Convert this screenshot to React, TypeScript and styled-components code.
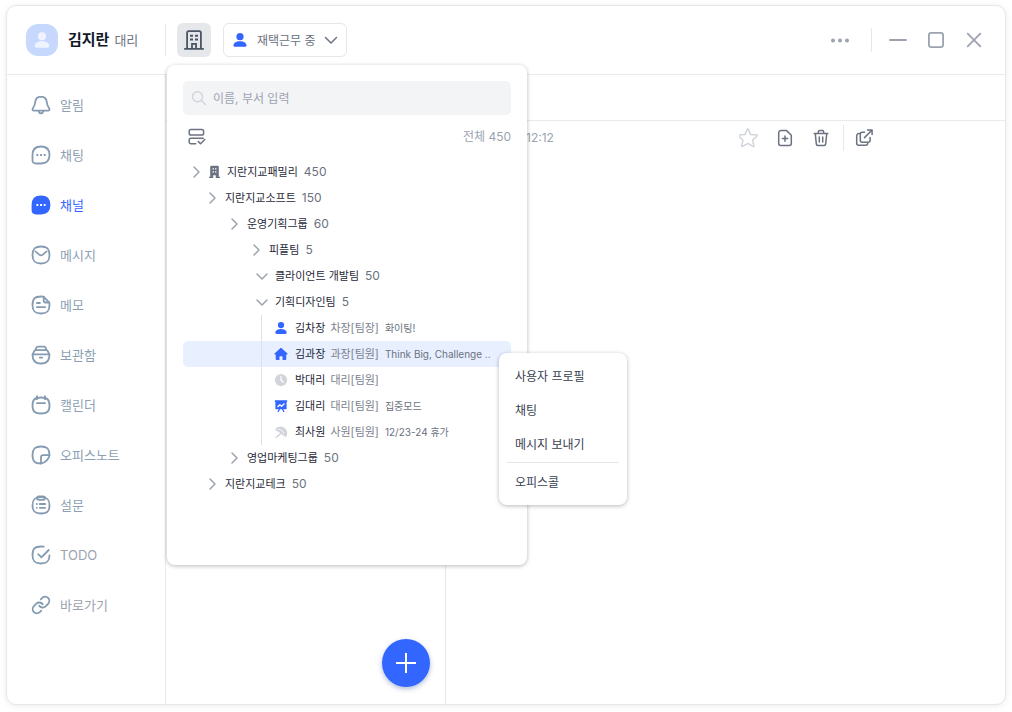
import React from "react";
import styled, { createGlobalStyle, css } from "styled-components";

const GlobalStyle = createGlobalStyle`
  *, *::before, *::after { box-sizing: border-box; }
  body {
    margin: 0;
    background: #fff;
    font-family: Inter, "Noto Sans CJK KR", sans-serif;
    font-size: 12px;
    line-height: 20px;
    color: #1f2937;
  }
  button, input, select { font: inherit; color: inherit; }
  button { padding: 0; border: 0; background: none; cursor: pointer; }
  ul { list-style: none; margin: 0; padding: 0; }
  svg { display: block; flex: none; }
`;

const AppWindow = styled.div`
  display: flex;
  flex-direction: column;
  min-height: calc(100vh - 12px);
  margin: 5px 6px 7px;
  border: 1px solid #e5e7eb;
  border-radius: 10px;
  background: #fff;
  box-shadow: 0 1px 6px rgba(0, 0, 0, 0.08);
`;

const Header = styled.header`
  display: flex;
  align-items: center;
  height: 69px;
  padding: 0 19px;
  border-bottom: 1px solid #e9eaec;
`;

const Profile = styled.div`
  display: flex;
  align-items: center;
  width: 140px;
  height: 32px;
  border-right: 1px solid #e5e7eb;
`;

const Avatar = styled.span`
  display: flex;
  align-items: center;
  justify-content: center;
  width: 32px;
  height: 32px;
  margin-right: 10px;
  border-radius: 12px;
  background: #c7d8ff;
  color: #eef3ff;
`;

const UserName = styled.strong`
  margin-right: 5px;
  font-size: 15px;
  font-weight: 700;
  color: #111827;
`;

const UserRank = styled.span`
  font-size: 13px;
  color: #6b7280;
`;

const OrgAnchor = styled.div`
  position: relative;
  margin: 0 12px 0 11px;
`;

const OrgButton = styled.button`
  display: flex;
  align-items: center;
  justify-content: center;
  width: 34px;
  height: 34px;
  border-radius: 6px;
  background: #e5e7eb;
  color: #4b5563;
`;

const StatusBox = styled.label`
  display: flex;
  align-items: center;
  gap: 8px;
  width: 124px;
  height: 34px;
  padding: 0 8px;
  border: 1px solid #e5e7eb;
  border-radius: 6px;
  color: #3366ff;
`;

const StatusSelect = styled.select`
  flex: 1;
  min-width: 0;
  height: 22px;
  padding: 2px 0 0 1px;
  border: 0;
  outline: 0;
  appearance: none;
  background: transparent;
  color: #6b7280;
`;

const WindowControls = styled.div`
  display: flex;
  align-items: center;
  gap: 14px;
  margin-left: auto;
  color: #9ca3af;
`;

const IconButton = styled.button<{ $size: number }>`
  display: flex;
  align-items: center;
  justify-content: center;
  width: ${(p) => p.$size}px;
  height: ${(p) => p.$size}px;
`;

const Divider = styled.span<{ $height: number }>`
  width: 1px;
  height: ${(p) => p.$height}px;
  background: #e5e7eb;
`;

const MoreGroup = styled.div`
  display: flex;
  align-items: center;
  gap: 19px;
`;

const Body = styled.div`
  display: flex;
  flex: 1;
`;

const Sidebar = styled.nav`
  width: 159px;
  padding-top: 5px;
  border-right: 1px solid #e9eaec;
`;

const NavLink = styled.a<{ $active?: boolean; $muted?: boolean }>`
  display: flex;
  align-items: center;
  gap: 9px;
  height: 50px;
  padding-left: 24px;
  font-size: 13px;
  text-decoration: none;
  color: ${(p) => (p.$active ? "#3366ff" : p.$muted ? "#9ca3af" : "#8c9fb3")};

  svg {
    color: ${(p) => (p.$active ? "#3366ff" : "#859bb1")};
  }
`;

const Main = styled.main`
  display: flex;
  flex: 1;
  flex-direction: column;
`;

const SubHeader = styled.div`
  height: 46px;
  border-bottom: 1px solid #e9eaec;
`;

const Panels = styled.div`
  display: flex;
  flex: 1;
`;

const ChannelList = styled.section`
  display: flex;
  align-items: flex-end;
  justify-content: flex-end;
  width: 280px;
  padding: 0 15px 17px;
  border-right: 1px solid #e5e7eb;
`;

const AddButton = styled.button`
  display: flex;
  align-items: center;
  justify-content: center;
  width: 48px;
  height: 48px;
  border-radius: 50%;
  background: #3366ff;
  color: #fff;
  box-shadow: 0 2px 5px rgba(30, 64, 140, 0.35);
`;

const Detail = styled.section`
  flex: 1;
`;

const DetailBar = styled.div`
  display: flex;
  align-items: center;
  justify-content: space-between;
  height: 34px;
  padding: 0 131px 0 80px;
`;

const Time = styled.time`
  color: #9ca3af;
`;

const DetailTools = styled.div`
  display: flex;
  align-items: center;
  gap: 16px;
  color: #6b7280;
`;

const OpenGroup = styled.div`
  display: flex;
  align-items: center;
  gap: 10px;
  margin-left: -4px;
`;

const floating = css`
  position: absolute;
  border-radius: 8px;
  background: #fff;
  box-shadow: 0 1px 4px rgba(0, 0, 0, 0.28);
`;

const OrgPopup = styled.section`
  ${floating}
  z-index: 10;
  top: 42px;
  left: -10px;
  width: 360px;
  min-height: 500px;
  padding: 16px;
`;

const SearchBox = styled.label`
  display: flex;
  align-items: center;
  gap: 6px;
  height: 34px;
  padding: 0 8px;
  border-radius: 5px;
  background: #f3f4f6;
  color: #d1d5db;
`;

const SearchInput = styled.input`
  flex: 1;
  min-width: 0;
  padding: 2px 0 0;
  border: 0;
  outline: 0;
  background: transparent;
  color: #1f2937;

  &::placeholder {
    color: #9ca3af;
    opacity: 1;
  }
`;

const ListTools = styled.div`
  display: flex;
  align-items: center;
  justify-content: space-between;
  height: 44px;
  padding-left: 4px;
  color: #6b7280;
`;

const Total = styled.span`
  color: #9ca3af;
`;

const TreeRow = styled.button<{ $indent: number }>`
  display: flex;
  align-items: center;
  gap: 4px;
  width: 100%;
  height: 26px;
  padding-left: ${(p) => p.$indent}px;
  color: #9ca3af;
`;

const RowName = styled.span`
  padding-left: 1px;
  font-size: 11px;
  color: #1f2937;
  white-space: nowrap;
`;

const RowCount = styled.span`
  padding-left: 2px;
  font-size: 12px;
  color: #6b7280;
`;

const MemberGroup = styled.ul`
  position: relative;

  &::before {
    content: "";
    position: absolute;
    top: 0;
    bottom: 0;
    left: 78px;
    width: 1px;
    background: #dfe2e7;
  }
`;

const MemberRow = styled.button<{ $selected: boolean }>`
  display: flex;
  align-items: center;
  gap: 5px;
  width: 100%;
  height: 26px;
  padding-left: 91px;
  border-radius: 5px;
  background: ${(p) => (p.$selected ? "#e8efff" : "transparent")};
  font-size: 11px;
  color: #6b7280;
  white-space: nowrap;
`;

const StatusIcon = styled.span<{ $on: boolean }>`
  margin-right: 1px;
  color: ${(p) => (p.$on ? "#3366ff" : "#d1d5db")};
`;

const MemberRank = styled.span`
  color: #7b818d;
`;

const MemberNote = styled.span`
  padding-left: 1px;
  font-size: 10px;
`;

const ContextMenu = styled.div`
  ${floating}
  top: 288px;
  left: 332px;
  width: 128px;
  padding: 6px 0;
`;

const MenuItem = styled.button`
  display: block;
  width: 100%;
  height: 34px;
  padding: 2px 0 0 16px;
  text-align: left;
  color: #374151;
`;

const MenuLine = styled.hr`
  height: 1px;
  margin: 1px 8px 2px;
  border: 0;
  background: #e5e7eb;
`;

interface IconProps {
  size?: number;
  box?: number;
  width?: number;
  children: React.ReactNode;
}

const Line = ({ size = 20, box = 20, width = 1.8, children }: IconProps) => (
  <svg
    width={size}
    height={size}
    viewBox={`0 0 ${box} ${box}`}
    fill="none"
    stroke="currentColor"
    strokeWidth={width}
    strokeLinecap="round"
    strokeLinejoin="round"
    aria-hidden="true"
  >
    {children}
  </svg>
);

const Solid = ({ size = 16, box = 16, children }: IconProps) => (
  <svg width={size} height={size} viewBox={`0 0 ${box} ${box}`} fill="currentColor" aria-hidden="true">
    {children}
  </svg>
);

const Person = ({ size }: { size: number }) => (
  <Solid size={size}>
    <circle cx="8" cy="4.700" r="3.600" />
    <path d="M8 9.200c3.800 0 6.300 1.600 6.500 4 .1 1.100-.6 1.600-1.700 1.600H3.200c-1.100 0-1.800-.5-1.700-1.600.2-2.400 2.700-4 6.500-4z" />
  </Solid>
);

const ChevronRight = () => (
  <Line size={16} box={16} width={1.5}>
    <path d="M6 3l5 5-5 5" />
  </Line>
);

const ChevronDown = () => (
  <Line size={16} box={16} width={1.5}>
    <path d="M3 6l5 5 5-5" />
  </Line>
);

const chatShape =
  "M10 1.500c5.400 0 8.500 3.200 8.500 8.500s-3.100 8.500-8.500 8.500H5c-2.500 0-3.500-1-3.500-3.500v-5C1.500 4.700 4.600 1.500 10 1.500z";
const squircle = "M10 1.500c6.200 0 8.500 2.300 8.500 8.500s-2.300 8.500-8.500 8.500S1.500 16.200 1.500 10 3.800 1.500 10 1.500z";
const chatDots = "M5.400 9h1.900v1.900H5.400zM9.100 9H11v1.900H9.100zM12.700 9h1.900v1.900h-1.900z";

const icons = {
  bell: (
    <Line>
      <path d="M10 1.700C6.700 1.700 4.500 4 4.200 7.200 4 10 3.300 11.200 1.900 13.200c-.9 1.400-.4 2.500 1.200 2.500h13.800c1.600 0 2.100-1.100 1.200-2.500-1.400-2-2.100-3.200-2.300-6C15.500 4 13.300 1.700 10 1.700z" />
      <path d="M7.600 16.300c.4 1.400 1.200 2.100 2.400 2.100s2-.7 2.400-2.100" />
    </Line>
  ),
  chat: (
    <Line>
      <path d={chatShape} />
      <path d={chatDots} fill="currentColor" stroke="none" />
    </Line>
  ),
  channel: (
    <Line>
      <path d={chatShape} fill="currentColor" />
      <path d={chatDots} fill="#fff" stroke="none" />
    </Line>
  ),
  mail: (
    <Line>
      <path d={squircle} />
      <path d="M4.400 6.400l3.800 3.200c1.100.9 2.500.9 3.600 0l3.800-3.200" />
    </Line>
  ),
  memo: (
    <Line>
      <path d="M12.500 1.700Q11.400 1.500 10 1.500C3.800 1.500 1.500 3.800 1.500 10s2.300 8.500 8.500 8.500 8.500-2.300 8.500-8.500q0-1.200-.2-2.300z" />
      <path d="M12.700 2v3.500a2 2 0 0 0 2 2h3.400M5.900 8h3M5.900 12.200h8.200" />
    </Line>
  ),
  archive: (
    <Line>
      <path d="M1.500 9.300h17q0 9.200-7.500 9.200H9q-7.500 0-7.500-9.200z" />
      <path d="M1.700 9.300l1.500-3.200q.5-1 1.600-1h10.400q1.100 0 1.600 1l1.500 3.200M4.600 5l.6-2q.4-1.400 1.800-1.400h6q1.400 0 1.800 1.400l.6 2M8.800 12.600h2.400" />
    </Line>
  ),
  calendar: (
    <Line>
      <path d="M10 2.500c6.200 0 8.500 2 8.500 8s-2.300 8-8.500 8-8.500-2-8.500-8 2.300-8 8.500-8z" />
      <path d="M6 1.200v3M14 1.200v3M5.900 8.100h8.200" />
    </Line>
  ),
  note: (
    <Line>
      <path d="M10 18.500C3.800 18.500 1.500 16.200 1.500 10S3.800 1.500 10 1.500s8.500 2.300 8.500 8.500q0 2.500-2.700 5.400T10 18.500z" />
      <path d="M10 18.400v-6.200a2 2 0 0 1 2-2h6.300" />
    </Line>
  ),
  survey: (
    <Line>
      <path d="M10 2.100c6.200 0 8.500 2.200 8.500 8.200s-2.300 8.200-8.500 8.200-8.500-2.200-8.500-8.200 2.300-8.200 8.500-8.200z" />
      <rect x="6" y="1.300" width="8" height="3.500" rx="1.700" />
      <path d="M5.800 9h.1M8.800 9h5.400M5.800 12.800h.1M8.800 12.800h5.400" />
    </Line>
  ),
  todo: (
    <Line>
      <path d="M12.800 1.600Q11.600 1.500 10 1.500C3.800 1.500 1.500 3.800 1.500 10s2.300 8.500 8.500 8.500 8.500-2.300 8.500-8.200" />
      <path d="M7.200 9.200l3.200 3.100 7.300-7.300" />
    </Line>
  ),
  link: (
    <Line box={24} width={2.2}>
      <path d="M10 13a5 5 0 0 0 7.540.54l3-3a5 5 0 0 0-7.070-7.070l-1.720 1.710" />
      <path d="M14 11a5 5 0 0 0-7.540-.54l-3 3a5 5 0 0 0 7.070 7.070l1.710-1.710" />
    </Line>
  ),
};

const navItems: { label: string; icon: keyof typeof icons; active?: boolean; muted?: boolean }[] = [
  { label: "알림", icon: "bell" },
  { label: "채팅", icon: "chat" },
  { label: "채널", icon: "channel", active: true },
  { label: "메시지", icon: "mail" },
  { label: "메모", icon: "memo" },
  { label: "보관함", icon: "archive" },
  { label: "캘린더", icon: "calendar" },
  { label: "오피스노트", icon: "note" },
  { label: "설문", icon: "survey" },
  { label: "TODO", icon: "todo", muted: true },
  { label: "바로가기", icon: "link", muted: true },
];

interface Dept {
  name: string;
  count: number;
  indent: number;
  open?: boolean;
  root?: boolean;
}

const upperDepts: Dept[] = [
  { name: "지란지교패밀리", count: 450, indent: 5, root: true },
  { name: "지란지교소프트", count: 150, indent: 21 },
  { name: "운영기획그룹", count: 60, indent: 43 },
  { name: "피플팀", count: 5, indent: 65 },
  { name: "클라이언트 개발팀", count: 50, indent: 71, open: true },
  { name: "기획디자인팀", count: 5, indent: 71, open: true },
];

const lowerDepts: Dept[] = [
  { name: "영업마케팅그룹", count: 50, indent: 43 },
  { name: "지란지교테크", count: 50, indent: 21 },
];

const memberIcons = {
  person: <Person size={14} />,
  home: (
    <Solid size={14}>
      <path d="M7.200 1.300a1.200 1.200 0 0 1 1.600 0l6.300 5.700c.7.700.4 1.500-.5 1.500H14v5.300c0 .7-.4 1.100-1.100 1.100H9.800v-3.600c0-.5-.3-.8-.8-.8H7c-.5 0-.8.3-.8.8v3.600H3.100c-.7 0-1.100-.4-1.100-1.100V8.500h-.6C.5 8.500.2 7.700.9 7z" />
    </Solid>
  ),
  clock: (
    <Solid size={14}>
      <circle cx="8" cy="8" r="7" />
      <path d="M8 4.300V8l2.400 2.300" fill="none" stroke="#fff" strokeWidth="1.500" strokeLinecap="round" strokeLinejoin="round" />
    </Solid>
  ),
  board: (
    <Solid size={14}>
      <path d="M1 1.500h14v1.800h-.6v8.500H10.600l1.600 3h-1.600l-1.600-3H7l-1.600 3H3.800l1.600-3H1.600V3.300H1z" />
      <path d="M4.300 8.800l2.400-2.300 2 1.800 3-2.800" fill="none" stroke="#fff" strokeWidth="1.400" strokeLinecap="round" strokeLinejoin="round" />
    </Solid>
  ),
  parasol: (
    <Solid size={14}>
      <path d="M1.200 5.300C4 1.300 8.500.7 11.900 3.200c3.600 2.800 4.100 7.300 1.700 10.800l-5.200-3.700-6 4.700-.9-.9 5.600-5z" />
      <path d="M4.300 5.200c2.600-.7 5.900 1.600 7 4.800" fill="none" stroke="#fff" strokeWidth=".9" />
    </Solid>
  ),
};

const members: { name: string; rank: string; note?: string; icon: keyof typeof memberIcons; on: boolean; selected?: boolean }[] = [
  { name: "김차장", rank: "차장[팀장]", note: "화이팅!", icon: "person", on: true },
  { name: "김과장", rank: "과장[팀원]", note: "Think Big, Challenge ..", icon: "home", on: true, selected: true },
  { name: "박대리", rank: "대리[팀원]", icon: "clock", on: false },
  { name: "김대리", rank: "대리[팀원]", note: "집중모드", icon: "board", on: true },
  { name: "최사원", rank: "사원[팀원]", note: "12/23-24 휴가", icon: "parasol", on: false },
];

const DeptRow = ({ name, count, indent, open, root }: Dept) => (
  <li>
    <TreeRow type="button" $indent={indent} aria-expanded={!!open}>
      {open ? <ChevronDown /> : <ChevronRight />}
      {root && (
        <Solid size={14} box={14}>
          <path
            fill="#6b7280"
            fillRule="evenodd"
            d="M3.200.8h6.600q1 0 1 1v10H12V13H7.800v-2.800H5.200V13H1v-1.200h1.200v-10q0-1 1-1zM4.600 3.200v1.300H6V3.200zM7 3.200v1.300h1.400V3.200zM4.600 6.200v1.300H6V6.200zM7 6.200v1.300h1.400V6.200z"
          />
        </Solid>
      )}
      <RowName>{name}</RowName>
      <RowCount>{count}</RowCount>
    </TreeRow>
  </li>
);

const OrgChart = () => (
  <OrgPopup aria-label="조직도">
    <SearchBox>
      <Line size={16} box={16} width={1.4}>
        <circle cx="6.500" cy="6.700" r="5" />
        <path d="M10.300 10.500l4 4" />
      </Line>
      <SearchInput type="text" placeholder="이름, 부서 입력" aria-label="이름, 부서 입력" />
    </SearchBox>
    <ListTools>
      <IconButton type="button" $size={20} aria-label="선택">
        <Line width={1.5}>
          <rect x="2.200" y="2.600" width="14.400" height="5.400" rx="1.800" />
          <path d="M16.200 11.200H4a1.800 1.800 0 0 0-1.800 1.800v2A1.800 1.800 0 0 0 4 16.800h4.700M11.200 14.500l2.300 2.300 4.300-4.300" />
        </Line>
      </IconButton>
      <Total>전체 450</Total>
    </ListTools>
    <ul>
      {upperDepts.map((d) => (
        <DeptRow key={d.name} {...d} />
      ))}
      <li>
        <MemberGroup>
          {members.map((m) => (
            <li key={m.name}>
              <MemberRow type="button" $selected={!!m.selected}>
                <StatusIcon $on={m.on}>{memberIcons[m.icon]}</StatusIcon>
                <RowName>{m.name}</RowName>
                <MemberRank>{m.rank}</MemberRank>
                {m.note && <MemberNote>{m.note}</MemberNote>}
              </MemberRow>
            </li>
          ))}
        </MemberGroup>
      </li>
      {lowerDepts.map((d) => (
        <DeptRow key={d.name} {...d} />
      ))}
    </ul>
    <ContextMenu role="menu">
      <MenuItem type="button" role="menuitem">사용자 프로필</MenuItem>
      <MenuItem type="button" role="menuitem">채팅</MenuItem>
      <MenuItem type="button" role="menuitem">메시지 보내기</MenuItem>
      <MenuLine />
      <MenuItem type="button" role="menuitem">오피스콜</MenuItem>
    </ContextMenu>
  </OrgPopup>
);

export default function App() {
  return (
    <>
      <GlobalStyle />
      <AppWindow>
        <Header>
          <Profile>
            <Avatar>
              <Person size={18} />
            </Avatar>
            <UserName>김지란</UserName>
            <UserRank>대리</UserRank>
          </Profile>
          <OrgAnchor>
            <OrgButton type="button" aria-label="조직도" aria-expanded="true">
              <Line size={20} width={1.8}>
                <path d="M.9 18.900h18.200M3.100 18.500V2.700q0-1.600 1.600-1.600h10.600q1.600 0 1.600 1.600v15.800M8 18.500v-4.700h4v4.700" strokeLinejoin="miter" />
                <path d="M6 5.700h3M11 5.700h3M6 9.600h3M11 9.600h3" strokeLinecap="butt" strokeWidth="2" />
              </Line>
            </OrgButton>
            <OrgChart />
          </OrgAnchor>
          <StatusBox>
            <Person size={16} />
            <StatusSelect aria-label="상태">
              <option>재택근무 중</option>
            </StatusSelect>
            <svg width="14" height="14" viewBox="0 0 14 14" fill="none" stroke="#6b7280" strokeWidth="1.500" strokeLinecap="round" strokeLinejoin="round" aria-hidden="true">
              <path d="M1.500 4.500L7 10l5.500-5.500" />
            </svg>
          </StatusBox>
          <WindowControls>
            <MoreGroup>
              <IconButton type="button" $size={24} aria-label="더보기">
                <Solid size={24} box={24}>
                  <circle cx="5" cy="12.500" r="2" />
                  <circle cx="12" cy="12.500" r="2" />
                  <circle cx="19" cy="12.500" r="2" />
                </Solid>
              </IconButton>
              <Divider $height={24} />
            </MoreGroup>
            <IconButton type="button" $size={24} aria-label="최소화">
              <Line size={24} box={24} width={2}>
                <path d="M4 12h16" />
              </Line>
            </IconButton>
            <IconButton type="button" $size={24} aria-label="최대화">
              <Line size={24} box={24} width={1.8}>
                <rect x="4.900" y="4.900" width="14.200" height="14.200" rx="2.500" />
              </Line>
            </IconButton>
            <IconButton type="button" $size={24} aria-label="닫기">
              <Line size={24} box={24} width={1.8}>
                <path d="M5.700 5.700l12.600 12.600M18.300 5.700L5.700 18.300" />
              </Line>
            </IconButton>
          </WindowControls>
        </Header>
        <Body>
          <Sidebar>
            <ul>
              {navItems.map((n) => (
                <li key={n.label}>
                  <NavLink href="#" $active={n.active} $muted={n.muted}>
                    {icons[n.icon]}
                    {n.label}
                  </NavLink>
                </li>
              ))}
            </ul>
          </Sidebar>
          <Main>
            <SubHeader />
            <Panels>
              <ChannelList>
                <AddButton type="button" aria-label="추가">
                  <Line size={20} width={2}>
                    <path d="M10 0v20M0 10h20" strokeLinecap="butt" />
                  </Line>
                </AddButton>
              </ChannelList>
              <Detail>
                <DetailBar>
                  <Time>12:12</Time>
                  <DetailTools>
                    <IconButton type="button" $size={20} aria-label="즐겨찾기">
                      <Line width={1.5}>
                        <path
                          stroke="#d1d5db"
                          d="M8.200 1.500q.6-1.100 1.200 0l2 4.600.6.500 5.500.5q1.200.2.400 1.100l-4 3.600-.2.700 1.200 5.200q.1 1.200-1 .7l-4.700-2.800h-.8l-4.700 2.800q-1.100.5-1-.7l1.200-5.200-.2-.7-4-3.600q-.8-.9.400-1.100l5.500-.5.600-.5z"
                        />
                      </Line>
                    </IconButton>
                    <IconButton type="button" $size={20} aria-label="파일 추가">
                      <Line width={1.5}>
                        <path d="M11.600 2.600H5.700a2 2 0 0 0-2 2v10.800a2 2 0 0 0 2 2h8.600a2 2 0 0 0 2-2V7.200zM10 8v5.200M7.400 10.600h5.200" />
                      </Line>
                    </IconButton>
                    <IconButton type="button" $size={20} aria-label="삭제">
                      <Line width={1.5}>
                        <path d="M3.200 5.500h13.600M4.300 5.700l1 10.200a1.600 1.600 0 0 0 1.600 1.500h6.200a1.600 1.600 0 0 0 1.600-1.500l1-10.200M7.300 5.300V4q0-1.500 1.500-1.500h2.400q1.500 0 1.500 1.500v1.300M8.300 9v5M11.700 9v5" />
                      </Line>
                    </IconButton>
                    <OpenGroup>
                      <Divider $height={26} />
                      <IconButton type="button" $size={20} aria-label="새 창으로 열기">
                        <Line width={1.5}>
                          <path d="M10.500 4.200H8.300a2 2 0 0 0-2 2v6.100a2 2 0 0 0 2 2h5.800a2 2 0 0 0 2-2v-2.800M6 5.600H4.700a2 2 0 0 0-2 2v7.700a2 2 0 0 0 2 2h7a2 2 0 0 0 2-2v-.8M13.500 2h4.600v4.600M17.800 2.300l-7.300 7.300" />
                        </Line>
                      </IconButton>
                    </OpenGroup>
                  </DetailTools>
                </DetailBar>
              </Detail>
            </Panels>
          </Main>
        </Body>
      </AppWindow>
    </>
  );
}
